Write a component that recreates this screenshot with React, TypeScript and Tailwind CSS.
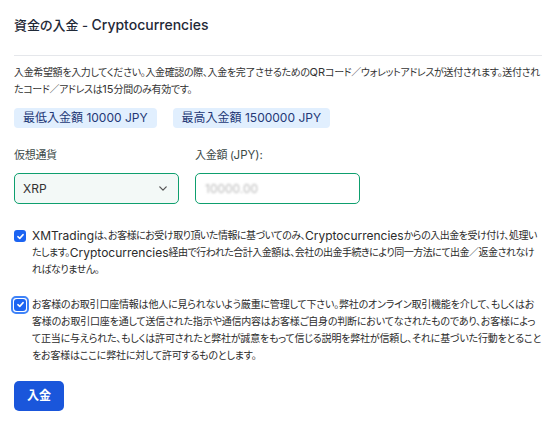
import React from 'react';

const font = "font-['Inter','Noto_Sans_CJK_JP',sans-serif] [font-feature-settings:'palt']";

/** Splits Latin runs from Japanese ones so each gets its own size / tracking. */
function Mixed({ text, jp, en }: { text: string; jp: string; en: string }) {
  const parts = text.split(/([A-Za-z0-9][A-Za-z0-9 .():]*)/);
  return (
    <>
      {parts.map((p, i) =>
        p === '' ? null : (
          <span key={i} className={`align-top ${/^[A-Za-z0-9]/.test(p) ? en : jp}`}>
            {p}
          </span>
        ),
      )}
    </>
  );
}

const bodyEn = 'text-[12px] tracking-normal';

function Check({ focused }: { focused?: boolean }) {
  const box = (
    <span className="flex h-[12px] w-[12px] items-center justify-center rounded-[3px] bg-[#1c64f2]">
      <svg viewBox="0 0 12 12" className="h-[9px] w-[9px]" fill="none" stroke="white" strokeWidth="2" strokeLinecap="round" strokeLinejoin="round">
        <path d="M2.5 6.2 5 8.5 9.5 3.5" />
      </svg>
    </span>
  );
  if (!focused) return <span className="mr-[6px] mt-[3px] shrink-0">{box}</span>;
  return (
    <span className="-ml-[3px] mr-[3px] mt-[-0.5px] flex shrink-0 items-center justify-center rounded-[5px] border-2 border-[#3f83f8] p-px">
      {box}
    </span>
  );
}

export default function App() {
  return (
    <div className={`min-h-[422px] bg-white px-[14px] pt-[15px] text-[#2b2b2b] ${font}`}>
      <h1 className="text-[13px] font-medium leading-[20px] text-[#1f2937]">
        <Mixed text="資金の入金 - Cryptocurrencies" jp="text-[13px]" en="text-[14px]" />
      </h1>
      <div className="mt-[20px] border-t border-[#e5e7eb]" />

      <p className="mt-[8px] text-[10px] leading-[17px] text-[#333]">
        <Mixed
          text="入金希望額を入力してください。入金確認の際、入金を完了させるためのQRコード／ウォレットアドレスが送付されます。送付されたコード／アドレスは15分間のみ有効です。"
          jp="text-[10px] tracking-[-0.35px]"
          en="text-[11px]"
        />
      </p>

      <div className="mt-[10px] flex gap-[16px]">
        <span className="rounded-[4px] bg-[#e1effe] px-[9px] text-[12px] leading-[20px] text-[#233876]">
          <Mixed text="最低入金額 10000 JPY" jp="text-[12px]" en="text-[12px]" />
        </span>
        <span className="rounded-[4px] bg-[#e1effe] px-[9px] text-[12px] leading-[20px] text-[#233876]">
          <Mixed text="最高入金額 1500000 JPY" jp="text-[12px]" en="text-[12px]" />
        </span>
      </div>

      <div className="mt-[19px] flex gap-[16px]">
        <div className="w-[165px]">
          <div className="text-[11px] leading-[16px] tracking-[-0.3px] text-[#3b4a48]">仮想通貨</div>
          <div className="mt-[10px] flex h-[31px] items-center justify-between rounded-[5px] border border-[#0e9f6e] bg-[#f3f9f7] pl-[8px] pr-[11px] text-[12px] text-[#333]">
            <span>XRP</span>
            <svg viewBox="0 0 10 6" className="h-[5px] w-[8px]" fill="none" stroke="#555" strokeWidth="1.6" strokeLinecap="round" strokeLinejoin="round">
              <path d="M1 1l4 4 4-4" />
            </svg>
          </div>
        </div>
        <div className="w-[165px]">
          <div className="text-[11px] leading-[16px] text-[#3b4a48]">
            <Mixed text="入金額 (JPY):" jp="text-[11px] tracking-[-0.3px]" en="text-[11.5px]" />
          </div>
          <div className="mt-[10px] flex h-[31px] items-center rounded-[5px] border border-[#0e9f6e] bg-white pl-[9px] text-[12px]">
            <span className="text-[#b9b9b9] blur-[1px]">10000.00</span>
          </div>
        </div>
      </div>

      <div className="mt-[23px] flex items-start text-[10px] leading-[17px] text-[#2b2b2b]">
        <Check />
        <p>
          <Mixed
            text="XMTradingは、お客様にお受け取り頂いた情報に基づいてのみ、Cryptocurrenciesからの入出金を受け付け、処理いたします。Cryptocurrencies経由で行われた合計入金額は、会社の出金手続きにより同一方法にて出金／返金されなければなりません。"
            jp="text-[10px] tracking-[-0.5px]"
            en={bodyEn}
          />
        </p>
      </div>

      <div className="mt-[18px] flex items-start text-[10px] leading-[17px] text-[#2b2b2b]">
        <Check focused />
        <p>
          <Mixed
            text="お客様のお取引口座情報は他人に見られないよう厳重に管理して下さい。弊社のオンライン取引機能を介して、もしくはお客様のお取引口座を通して送信された指示や通信内容はお客様ご自身の判断においてなされたものであり、お客様によって正当に与えられた、もしくは許可されたと弊社が誠意をもって信じる説明を弊社が信頼し、それに基づいた行動をとることをお客様はここに弊社に対して許可するものとします。"
            jp="text-[10px] tracking-[-0.2px]"
            en={bodyEn}
          />
        </p>
      </div>

      <button type="button" className="mt-[17px] h-[30px] w-[50px] rounded-[5px] bg-[#1a56db] text-[12px] font-bold text-white">
        入金
      </button>
    </div>
  );
}
